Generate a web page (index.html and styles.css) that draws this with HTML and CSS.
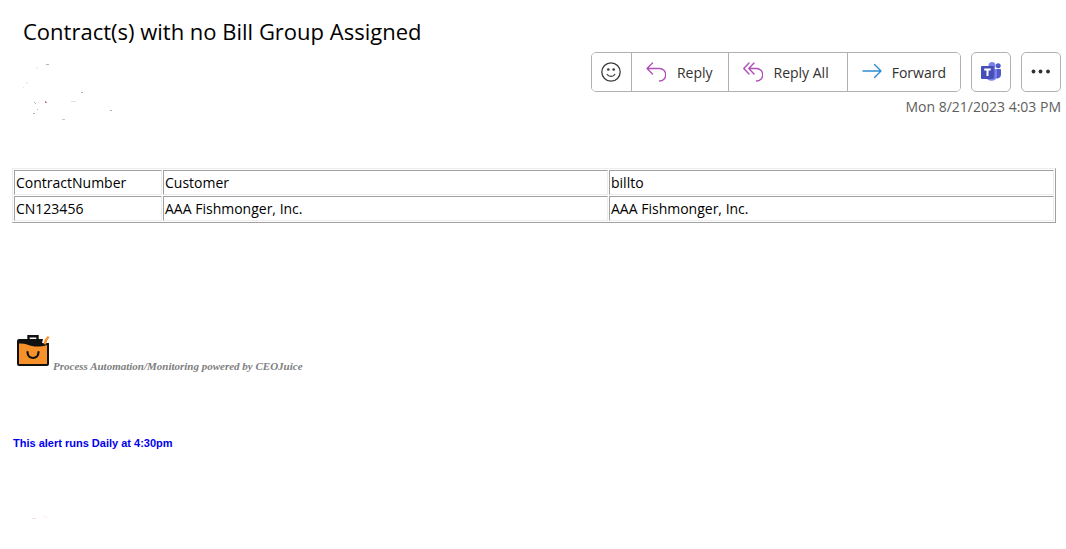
FILE: index.html
```html
<!DOCTYPE html>
<html lang="en">
<head>
    <meta charset="UTF-8">
    <meta name="viewport" content="width=device-width, initial-scale=1.0">
    <title>Contract(s) with no Bill Group Assigned</title>
    <link rel="stylesheet" href="styles.css">
</head>
<body>

    <!-- Message header -->
    <header class="message-header">
        <h1>Contract(s) with no Bill Group Assigned</h1>
        <div class="header-row">
            <!-- Blanked out sender block -->
            <svg class="marks" width="92" height="64" viewBox="0 0 92 64" aria-hidden="true">
                <g fill="#b4b4b4">
                    <path d="M23 6h3v1h-3zM58 34h2v1h-2zM11 44h1v1h-1zM12 45h1v1h-1zM10 55h2v1h-2zM14 51h1v1h-1z"/>
                    <path d="M39 61h3v1h-3z" opacity=".7"/>
                    <path d="M48 43h5v1h-5zM3 24h1v1h-1zM4 25h1v1h-1zM0 29h1v1h-1zM13 9h1v1h-1zM14 10h1v1h-1z" opacity=".4"/>
                </g>
                <path fill="#b58a78" d="M22 43h1v1h1v1h-2z"/>
                <path fill="#a3aec8" d="M87 52h2v1h-2z"/>
            </svg>
            <div class="actions">
                <div class="toolbar">
                    <div class="btn-group">
                        <button class="btn btn-icon" type="button" aria-label="React">
                            <svg width="20" height="20" viewBox="0 0 20 20" fill="none" stroke="#3b3a39" stroke-width="1.3" stroke-linecap="round">
                                <circle cx="10" cy="10" r="9.200"/>
                                <path d="M6.200 12.500c1.600 2.400 6 2.400 7.600 0"/>
                                <circle cx="7.300" cy="7.500" r="1.300" fill="#3b3a39" stroke="none"/>
                                <circle cx="12.700" cy="7.500" r="1.300" fill="#3b3a39" stroke="none"/>
                            </svg>
                        </button>
                        <button class="btn btn-reply" type="button">
                            <svg width="20" height="20" viewBox="0 0 20 20" fill="none" stroke="#b14fbb" stroke-width="1.4" stroke-linecap="round" stroke-linejoin="round">
                                <path d="M6.500 1L1 6.500 6.500 12M1 6.500h12.500a6 6 0 0 1 0 12.500"/>
                            </svg>
                            Reply
                        </button>
                        <button class="btn btn-reply-all" type="button">
                            <svg width="20" height="20" viewBox="0 0 20 20" fill="none" stroke="#b14fbb" stroke-width="1.4" stroke-linecap="round" stroke-linejoin="round">
                                <path d="M6 1L.800 6.500 6 12M11 1L5.800 6.500 11 12M5.800 6.500h7.700a6 6 0 0 1 0 12.500"/>
                            </svg>
                            Reply All
                        </button>
                        <button class="btn btn-forward" type="button">
                            <svg width="20" height="20" viewBox="0 0 20 20" fill="none" stroke="#2b8fd0" stroke-width="1.4" stroke-linecap="round" stroke-linejoin="round">
                                <path d="M1 9h18M12.500 2.500L19 9l-6.500 6.500"/>
                            </svg>
                            Forward
                        </button>
                    </div>
                    <button class="btn btn-single" type="button" aria-label="Share to Teams">
                        <svg width="20" height="20" viewBox="0 0 20 20">
                            <circle cx="17.200" cy="3.800" r="2.500" fill="#5059c9"/>
                            <path d="M14 7h5.200a.8.8 0 0 1 .8.8v5a3.600 3.600 0 0 1-6 2.700z" fill="#5059c9"/>
                            <circle cx="11" cy="3.500" r="3.500" fill="#7b83eb"/>
                            <path d="M6 7h9.300a.7.7 0 0 1 .7.7v6.500a5.600 5.600 0 0 1-11 0V8z" fill="#7b83eb"/>
                            <path d="M6 4h6.500a1 1 0 0 1 1 1v11H6z" fill="#5059c9"/>
                            <rect x="0" y="4" width="12.500" height="13" rx="1" fill="#464eb8"/>
                            <path d="M3.200 6.500h6.600v2H7.500V14H5.500V8.500H3.200z" fill="#fff"/>
                        </svg>
                    </button>
                    <button class="btn btn-single" type="button" aria-label="More actions">
                        <svg width="20" height="20" viewBox="0 0 20 20" fill="#323130">
                            <circle cx="2.500" cy="9.500" r="1.900"/>
                            <circle cx="9.500" cy="9.500" r="1.900"/>
                            <circle cx="17" cy="9.500" r="1.900"/>
                        </svg>
                    </button>
                </div>
                <time class="date" datetime="2023-08-21T16:03">Mon 8/21/2023 4:03 PM</time>
            </div>
        </div>
    </header>

    <!-- Message body -->
    <main class="message-body">
        <table class="contracts">
            <colgroup>
                <col class="col-number">
                <col>
                <col>
            </colgroup>
            <tr>
                <td>ContractNumber</td>
                <td>Customer</td>
                <td>billto</td>
            </tr>
            <tr>
                <td>CN123456</td>
                <td>AAA Fishmonger, Inc.</td>
                <td>AAA Fishmonger, Inc.</td>
            </tr>
        </table>

        <div class="powered">
            <svg class="logo" width="34" height="34" viewBox="0 0 34 34" aria-hidden="true">
                <path d="M12.500 7V3.200h9V7" fill="none" stroke="#111" stroke-width="2.400"/>
                <path d="M3 6h24l-1 4h7v21a2 2 0 0 1-2 2H3a2 2 0 0 1-2-2V8a2 2 0 0 1 2-2z" fill="#111"/>
                <path d="M3 10.500c5-.5 8 1 13 2.500 5 1.200 10 .5 15-1v19H3z" fill="#f7922b"/>
                <path d="M27.500 11l1.300-4.500 3-3.500 1.700 1.200-2.300 3.300L30 11.500z" fill="#f7922b"/>
                <path d="M11.500 19c0 8 11 8 11 0" fill="none" stroke="#111" stroke-width="2.200" stroke-linecap="round"/>
            </svg>
            <em>Process Automation/Monitoring powered by CEOJuice</em>
        </div>

        <p class="schedule">This alert runs Daily at 4:30pm</p>

        <svg class="marks" width="40" height="4" viewBox="0 0 40 4" fill="#f8dedd" aria-hidden="true">
            <path d="M20 2h4v1h-4zM32 0h1v1h-1zM34 1h1v1h-1z"/>
        </svg>
    </main>

</body>
</html>
```
FILE: styles.css
```css
body {
    margin: 0;
    background-color: #fff;
    color: #000;
    font-family: 'Segoe UI', 'Open Sans', 'Noto Sans', sans-serif;
}

/* Header */
.message-header {
    padding: 15px 5px 0 23px;
}

h1 {
    margin: 0 0 5px;
    font-size: 22px;
    font-weight: 400;
    line-height: 32px;
}

.header-row {
    display: flex;
    justify-content: space-between;
    align-items: flex-start;
}

.marks {
    display: block;
    margin-top: 6px;
}

.actions {
    display: flex;
    flex-direction: column;
    align-items: flex-end;
    gap: 4px;
}

.toolbar {
    display: flex;
    gap: 10px;
}

.btn-group {
    display: flex;
    border: 1px solid #b3b0ad;
    border-radius: 5px;
    overflow: hidden;
}

.btn {
    display: flex;
    align-items: center;
    height: 38px;
    padding: 0 14px;
    gap: 10px;
    border: none;
    background-color: #fff;
    color: #323130;
    font-family: inherit;
    font-size: 14px;
    cursor: pointer;
}

.btn + .btn {
    border-left: 1px solid #b3b0ad;
}

.btn:hover {
    background-color: #f3f2f1;
}

.btn-icon {
    padding: 0 10px 0 9px;
}

.btn-reply {
    padding: 0 15px 0 14px;
}

.btn-reply-all {
    padding: 0 16px 0 14px;
}

.btn-reply,
.btn-reply-all {
    gap: 11px;
}

.btn-reply-all {
    padding-right: 18px;
}

.toolbar .btn-single {
    justify-content: center;
    width: 40px;
    height: 40px;
    padding: 0;
    border: 1px solid #b3b0ad;
    border-radius: 5px;
}

.date {
    color: #605e5c;
    font-size: 14px;
    line-height: 22px;
}

/* Body */
.message-body {
    padding: 46px 10px 24px 12px;
}

.contracts {
    width: 100%;
    table-layout: fixed;
    border: 1px solid;
    border-color: #ececec #a0a0a0 #a0a0a0 #ececec;
    border-spacing: 1px;
    font-family: 'Trebuchet MS', 'Open Sans', sans-serif;
    font-size: 14px;
    line-height: 23px;
}

.contracts td {
    padding: 0 1px;
    border: 1px solid;
    border-color: #a0a0a0 #ececec #ececec #a0a0a0;
}

.col-number {
    width: 148px;
}

.powered {
    display: flex;
    align-items: flex-end;
    gap: 3px;
    margin-top: 110px;
    padding-left: 4px;
    color: #808080;
    font-family: 'Liberation Serif', serif;
    font-size: 11px;
    font-weight: 700;
    line-height: 12px;
}

.logo {
    margin-bottom: 5px;
}

.schedule {
    margin: 64px 0 66px;
    padding-left: 1px;
    color: #0000ee;
    font-family: 'Liberation Sans', sans-serif;
    font-size: 11px;
    font-weight: 700;
    line-height: 14px;
}
```
